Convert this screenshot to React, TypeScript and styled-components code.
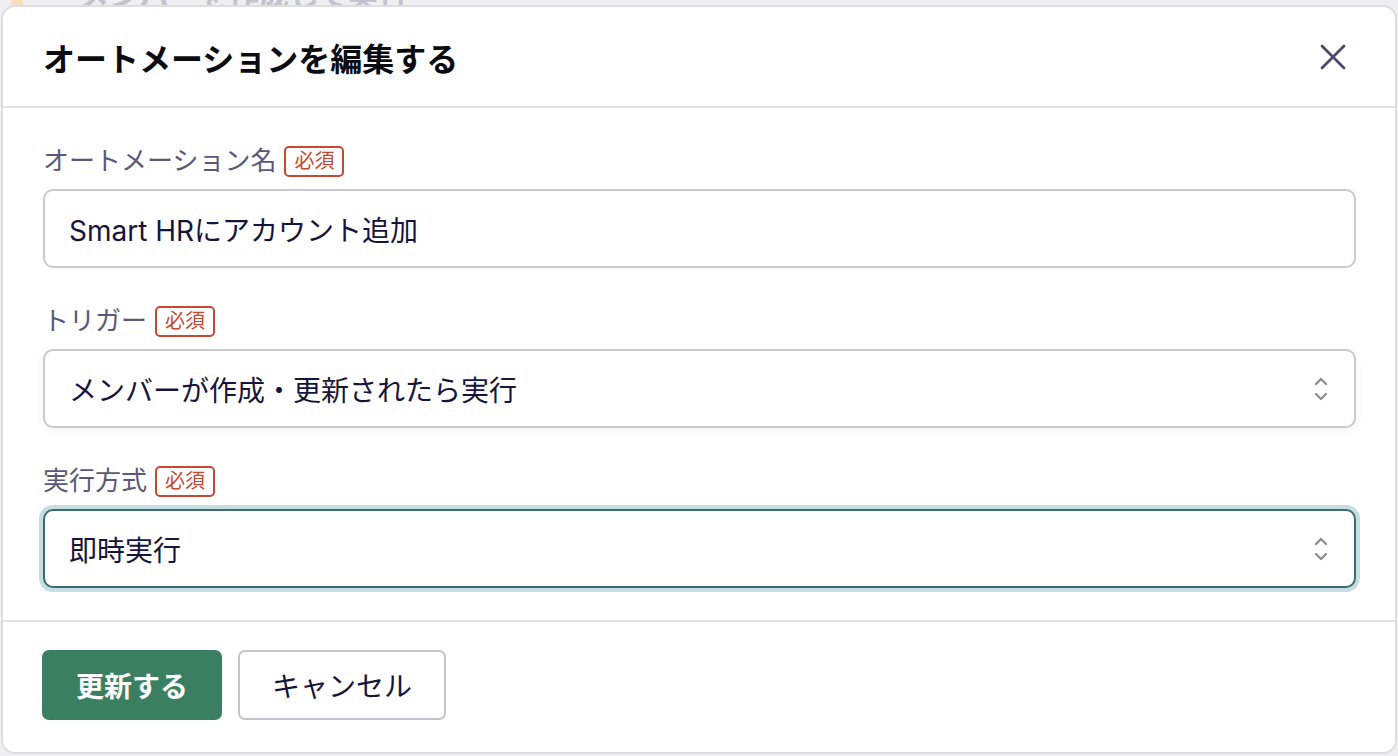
import styled, { createGlobalStyle } from "styled-components";

const GlobalStyle = createGlobalStyle`
    html, body {
        margin: 0;
        padding: 0;
        background-color: #efeff1;
        font-family: "Inter", "Noto Sans CJK JP", sans-serif;
    }
    * {
        box-sizing: border-box;
    }
`;

const fields = [
    { label: "オートメーション名", value: "Smart HRにアカウント追加", kind: "input" },
    { label: "トリガー", value: "メンバーが作成・更新されたら実行", kind: "select" },
    { label: "実行方式", value: "即時実行", kind: "select", focused: true },
];

const Chevrons = () => (
    <svg width="14" height="26" viewBox="0 0 14 26" fill="none">
        <path d="M2 8 L7 3 L12 8" stroke="#8a8a94" strokeWidth="2.2" strokeLinecap="round" strokeLinejoin="round" />
        <path d="M2 18 L7 23 L12 18" stroke="#8a8a94" strokeWidth="2.2" strokeLinecap="round" strokeLinejoin="round" />
    </svg>
);

const CloseIcon = () => (
    <svg width="26" height="26" viewBox="0 0 26 26" fill="none">
        <path d="M2 2 L24 24 M24 2 L2 24" stroke="#4b4a6c" strokeWidth="2.8" strokeLinecap="round" />
    </svg>
);

const App = () => {
    return (
        <>
            <GlobalStyle />
            <Page>
                <Backdrop>
                    <BackdropDot />
                    <BackdropText>メンバーを作成して実行</BackdropText>
                </Backdrop>
                <Modal>
                    <Header>
                        <Title>オートメーションを編集する</Title>
                        <CloseButton aria-label="閉じる">
                            <CloseIcon />
                        </CloseButton>
                    </Header>
                    <Body>
                        {fields.map((field, index) => (
                            <Field key={index}>
                                <LabelRow>
                                    <Label>{field.label}</Label>
                                    <Required>必須</Required>
                                </LabelRow>
                                <Control $focused={!!field.focused} $select={field.kind === "select"}>
                                    <ControlText>{field.value}</ControlText>
                                    {field.kind === "select" && <Chevrons />}
                                </Control>
                            </Field>
                        ))}
                    </Body>
                    <Footer>
                        <PrimaryButton>更新する</PrimaryButton>
                        <SecondaryButton>キャンセル</SecondaryButton>
                    </Footer>
                </Modal>
            </Page>
        </>
    );
};

export default App;

const Page = styled.div`
    display: flex;
    flex-direction: column;
    width: 1398px;
    height: 756px;
    padding: 0 1px 2px 1px;
    overflow: hidden;
`;

const Backdrop = styled.div`
    display: flex;
    align-items: flex-end;
    gap: 56px;
    height: 5px;
    padding-left: 10px;
    overflow: hidden;
    flex-shrink: 0;
`;

const BackdropDot = styled.div`
    width: 12px;
    height: 12px;
    margin-bottom: -4px;
    border-radius: 50%;
    background-color: #f6dfb8;
`;

const BackdropText = styled.div`
    font-size: 30px;
    font-weight: 700;
    line-height: 30px;
    margin-bottom: -5px;
    color: #c3c3d0;
    white-space: nowrap;
`;

const Modal = styled.div`
    display: flex;
    flex-direction: column;
    flex: 1;
    background-color: #ffffff;
    border: 2px solid #dedee2;
    border-radius: 14px;
    overflow: hidden;
`;

const Header = styled.div`
    display: flex;
    align-items: center;
    justify-content: space-between;
    height: 101px;
    padding: 0 49px 0 40px;
    border-bottom: 2px solid #e2e2e6;
    flex-shrink: 0;
`;

const Title = styled.h1`
    margin: 0;
    font-size: 32px;
    font-weight: 700;
    color: #0b0b12;
`;

const CloseButton = styled.button`
    display: flex;
    align-items: center;
    justify-content: center;
    padding: 0;
    border: none;
    background: none;
    cursor: pointer;
`;

const Body = styled.div`
    display: flex;
    flex-direction: column;
    gap: 35px;
    padding: 35px 39px 32px 40px;
    border-bottom: 2px solid #e2e2e6;
`;

const Field = styled.div`
    display: flex;
    flex-direction: column;
    gap: 10px;
`;

const LabelRow = styled.div`
    display: flex;
    align-items: center;
    gap: 8px;
    height: 36px;
`;

const Label = styled.span`
    font-size: 26px;
    color: #5a587a;
    line-height: 1;
`;

const Required = styled.span`
    display: inline-flex;
    align-items: center;
    justify-content: center;
    height: 31px;
    padding: 0 8px;
    border: 2px solid #c8472e;
    border-radius: 5px;
    font-size: 20px;
    color: #c8472e;
    line-height: 1;
`;

const Control = styled.div<{ $focused: boolean; $select: boolean }>`
    display: flex;
    align-items: center;
    justify-content: space-between;
    height: 79px;
    padding: 0 26px 0 24px;
    border: 2px solid ${(p) => (p.$focused ? "#3c6c70" : "#c9c9ce")};
    border-radius: 10px;
    background-color: #ffffff;
    box-shadow: ${(p) =>
        p.$focused
            ? "0 0 0 4px #c6dde1"
            : p.$select
            ? "0 2px 10px rgba(0, 0, 0, 0.05)"
            : "none"};
`;

const ControlText = styled.span`
    font-size: 28px;
    color: #16143c;
`;

const Footer = styled.div`
    display: flex;
    align-items: center;
    gap: 16px;
    padding: 28px 40px 0 39px;
`;

const PrimaryButton = styled.button`
    height: 70px;
    padding: 0 34px;
    border: none;
    border-radius: 7px;
    background-color: #3a7f62;
    color: #ffffff;
    font-family: inherit;
    font-size: 28px;
    font-weight: 700;
    cursor: pointer;
`;

const SecondaryButton = styled.button`
    height: 70px;
    padding: 0 32px;
    border: 2px solid #c3c4ca;
    border-radius: 7px;
    background-color: #ffffff;
    color: #16143c;
    font-family: inherit;
    font-size: 28px;
    cursor: pointer;
`;
